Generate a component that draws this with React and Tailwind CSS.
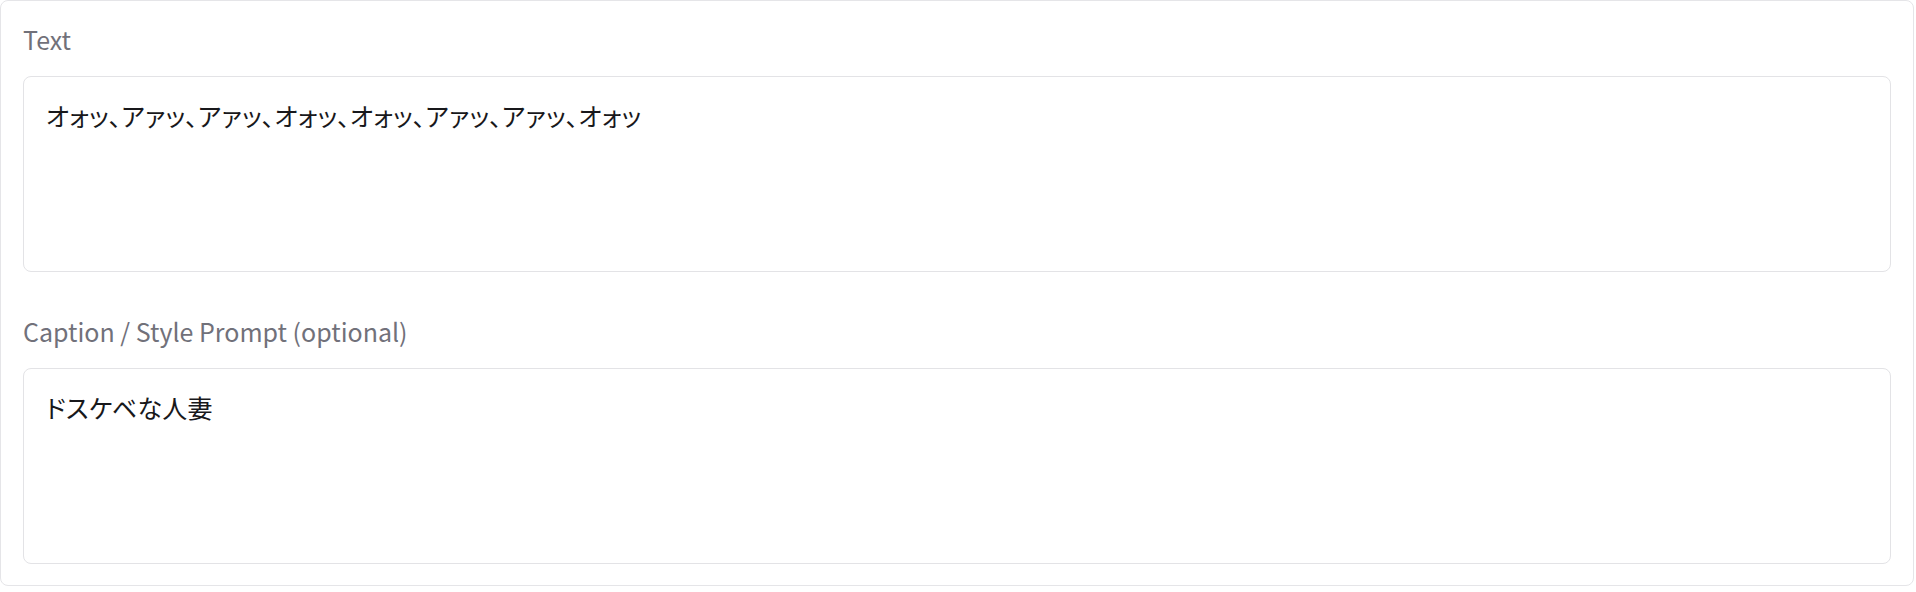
const FONT = "font-['Noto_Sans_CJK_JP','Liberation_Sans',sans-serif]";

const Field = ({ label, value, className = "" }) => (
    <label className={`flex flex-col ${className}`}>
        {/* Label */}
        <span className="text-[25px] leading-[36px] text-[#71717a] mb-[19px]">{label}</span>
        {/* Box */}
        <textarea
            readOnly
            value={value}
            className={`h-[196px] w-full resize-none rounded-lg border border-[#e3e3e6] bg-white px-[22px] py-[20px] text-[25px] leading-[36px] tracking-[0.25px] text-[#18181b] outline-none [font-feature-settings:'palt'] ${FONT}`}
        />
    </label>
);

const App = () => {
    return (
        <div className={`w-[1916px] h-[592px] bg-white ${FONT}`}>
            <div className="w-[1914px] h-[586px] rounded-lg border border-[#e5e5e8] bg-white px-[22px] pt-[20px] flex flex-col">
                <Field
                    label="Text"
                    value="オォッ、アァッ、アァッ、オォッ、オォッ、アァッ、アァッ、オォッ"
                />
                <Field label="Caption / Style Prompt (optional)" value="ドスケベな人妻" className="mt-[41px]" />
            </div>
        </div>
    );
};

export default App;
